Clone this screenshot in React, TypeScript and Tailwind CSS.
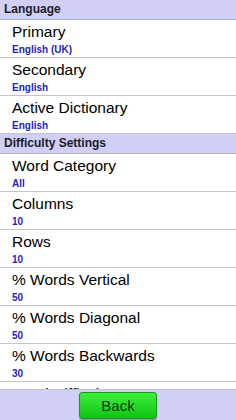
const sections = [
  {
    title: "Language",
    rows: [
      { label: "Primary", value: "English (UK)" },
      { label: "Secondary", value: "English" },
      { label: "Active Dictionary", value: "English" },
    ],
  },
  {
    title: "Difficulty Settings",
    rows: [
      { label: "Word Category", value: "All" },
      { label: "Columns", value: "10" },
      { label: "Rows", value: "10" },
      { label: "% Words Vertical", value: "50" },
      { label: "% Words Diagonal", value: "50" },
      { label: "% Words Backwards", value: "30" },
      { label: "Word Difficulty", value: "Medium" },
    ],
  },
];

function SettingRow({ label, value }: { label: string; value: string }) {
  return (
    <div className="h-[38px] shrink-0 border-b border-[#c4c4cc] bg-white px-3 pt-[3px]">
      <p className="text-[15.5px] leading-[18px] text-black">{label}</p>
      <p className="mt-[3px] text-[10px] font-bold leading-[12px] text-[#2424c8]">
        {value}
      </p>
    </div>
  );
}

export default function App() {
  return (
    <div className="flex h-[420px] w-[236px] flex-col overflow-hidden bg-white font-['Liberation_Sans',Arial,sans-serif]">
      <div className="flex flex-1 flex-col overflow-hidden">
        {sections.map((section) => (
          <div key={section.title} className="flex flex-col">
            <div className="h-[20px] shrink-0 border-b border-[#b4b4c4] bg-[#cfcff8] px-1 pt-[2px]">
              <p className="text-[12px] font-bold leading-[15px] text-[#1c1c28]">
                {section.title}
              </p>
            </div>
            {section.rows.map((row) => (
              <SettingRow key={row.label} label={row.label} value={row.value} />
            ))}
          </div>
        ))}
      </div>
      <div className="flex h-[31px] shrink-0 items-center justify-center border-t border-[#c0c0d0] bg-[#cfcff8]">
        <button className="h-[27px] w-[78px] rounded-[3px] border border-[#1a9a1a] bg-gradient-to-b from-[#3cf03c] to-[#0cc40c] text-[15px] leading-none text-[#0a3a0a] shadow-[0_1px_1px_rgba(0,0,0,0.3)]">
          Back
        </button>
      </div>
    </div>
  );
}
